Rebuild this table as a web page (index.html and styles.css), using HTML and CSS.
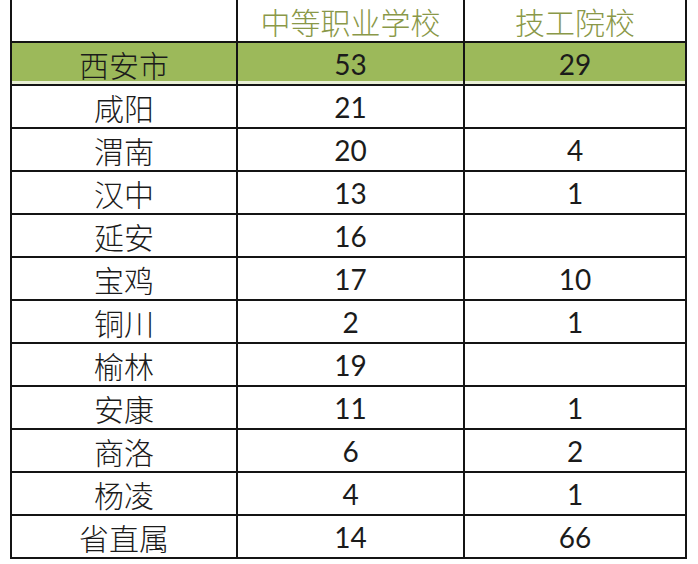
FILE: index.html
```html
<!DOCTYPE html>
<html lang="zh-CN">
<head>
<meta charset="utf-8">
<link rel="stylesheet" href="styles.css">
</head>
<body>
<table class="tbl">
  <colgroup><col class="c1"><col class="c2"><col class="c3"></colgroup>
  <tr class="head"><td></td><td>中等职业学校</td><td>技工院校</td></tr>
  <tr class="hl"><td>西安市</td><td>53</td><td>29</td></tr>
  <tr><td>咸阳</td><td>21</td><td></td></tr>
  <tr><td>渭南</td><td>20</td><td>4</td></tr>
  <tr><td>汉中</td><td>13</td><td>1</td></tr>
  <tr><td>延安</td><td>16</td><td></td></tr>
  <tr><td>宝鸡</td><td>17</td><td>10</td></tr>
  <tr><td>铜川</td><td>2</td><td>1</td></tr>
  <tr><td>榆林</td><td>19</td><td></td></tr>
  <tr><td>安康</td><td>11</td><td>1</td></tr>
  <tr><td>商洛</td><td>6</td><td>2</td></tr>
  <tr><td>杨凌</td><td>4</td><td>1</td></tr>
  <tr><td>省直属</td><td>14</td><td>66</td></tr>
</table>
</body>
</html>
```
FILE: styles.css
```css
html, body {
  margin: 0;
  padding: 0;
  background: #ffffff;
}
.tbl {
  margin-left: 10px;
  border-collapse: separate;
  border-spacing: 0;
  table-layout: fixed;
  width: 677px;
  font-family: "Lato", "Noto Sans CJK SC", sans-serif;
  font-size: 28px;
  color: #1b1b1b;
}
.c1 { width: 228px; }
.c2 { width: 227px; }
.c3 { width: 222px; }
.tbl td {
  height: 41px;
  padding: 0;
  text-align: center;
  vertical-align: middle;
  line-height: 36px;
  border-bottom: 2px solid #141414;
  border-right: 2px solid #141414;
}
.tbl td:first-child {
  border-left: 2px solid #141414;
  font-family: "Noto Sans CJK SC", sans-serif;
  font-size: 30px;
  font-weight: 300;
}
.head td {
  color: #8a9848;
  font-family: "Noto Sans CJK SC", sans-serif;
  font-size: 30px;
  font-weight: 300;
}
.hl td {
  background: #9cb95a;
  box-shadow: inset 0 -3px 0 #e9efd6;
}
```
